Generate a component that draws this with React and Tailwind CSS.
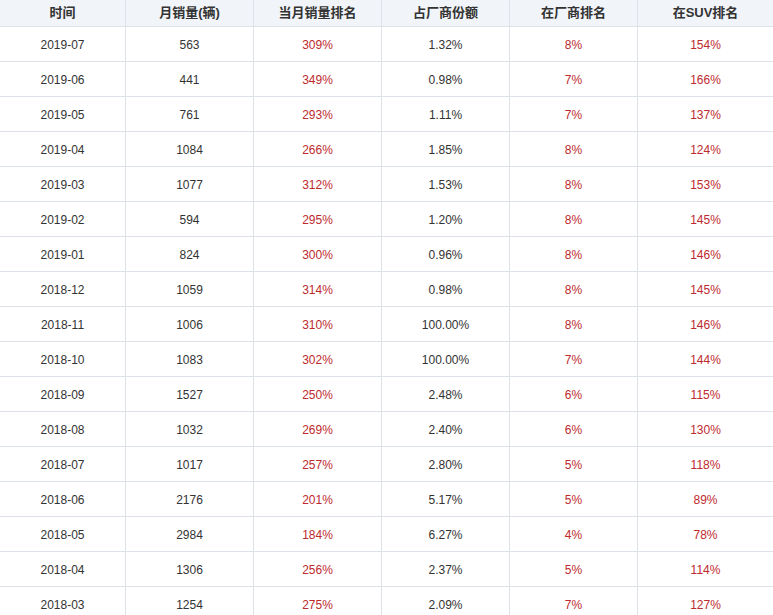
import React from "react";

const rows = [
  ["2019-07", "563", "309%", "1.32%", "8%", "154%"],
  ["2019-06", "441", "349%", "0.98%", "7%", "166%"],
  ["2019-05", "761", "293%", "1.11%", "7%", "137%"],
  ["2019-04", "1084", "266%", "1.85%", "8%", "124%"],
  ["2019-03", "1077", "312%", "1.53%", "8%", "153%"],
  ["2019-02", "594", "295%", "1.20%", "8%", "145%"],
  ["2019-01", "824", "300%", "0.96%", "8%", "146%"],
  ["2018-12", "1059", "314%", "0.98%", "8%", "145%"],
  ["2018-11", "1006", "310%", "100.00%", "8%", "146%"],
  ["2018-10", "1083", "302%", "100.00%", "7%", "144%"],
  ["2018-09", "1527", "250%", "2.48%", "6%", "115%"],
  ["2018-08", "1032", "269%", "2.40%", "6%", "130%"],
  ["2018-07", "1017", "257%", "2.80%", "5%", "118%"],
  ["2018-06", "2176", "201%", "5.17%", "5%", "89%"],
  ["2018-05", "2984", "184%", "6.27%", "4%", "78%"],
  ["2018-04", "1306", "256%", "2.37%", "5%", "114%"],
  ["2018-03", "1254", "275%", "2.09%", "7%", "127%"],
];

const headers = ["时间", "月销量(辆)", "当月销量排名", "占厂商份额", "在厂商排名", "在SUV排名"];

// columns 2, 4 and 5 are shown in red
const red = [false, false, true, false, true, true];

const cols = "grid grid-cols-[126px_128px_128px_128px_128px_1fr]";

export default function App() {
  return (
    <div
      className="w-[773px] h-[615px] overflow-hidden bg-white text-[#333]"
      style={{ fontFamily: '"Liberation Sans", "Noto Sans CJK SC", sans-serif' }}
    >
      <div className={`${cols} h-[27px] bg-[#f1f4f8] border-b border-[#dde2e8]`}>
        {headers.map((h, i) => (
          <div
            key={h}
            className={`flex items-center justify-center text-[13px] font-bold ${
              i < 5 ? "border-r border-[#dde2e8]" : ""
            }`}
          >
            {h}
          </div>
        ))}
      </div>
      {rows.map((r) => (
        <div key={r[0]} className={`${cols} h-[35px] border-b border-[#dde2e8]`}>
          {r.map((v, i) => (
            <div
              key={i}
              className={`flex items-center justify-center pt-px text-[12px] ${
                i < 5 ? "border-r border-[#dde2e8]" : ""
              } ${red[i] ? "text-[#bd2a2e]" : ""}`}
            >
              {v}
            </div>
          ))}
        </div>
      ))}
    </div>
  );
}
